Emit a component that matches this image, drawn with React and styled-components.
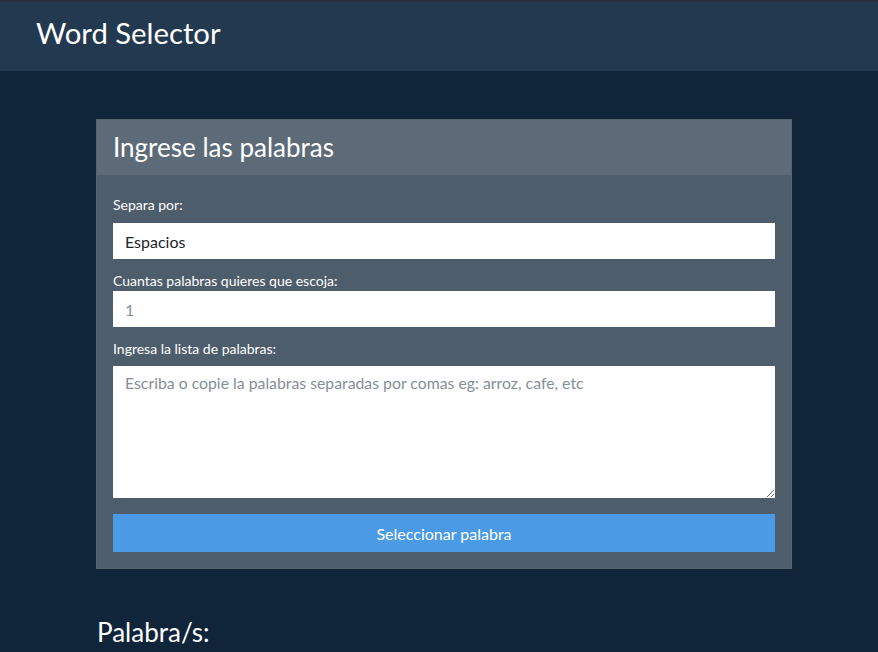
import React from 'react'
import styled, { createGlobalStyle } from 'styled-components'

const GlobalStyle = createGlobalStyle`
  body {
    margin: 0;
    background: #10243a;
    font-family: Lato, 'Open Sans', sans-serif;
    color: #ffffff;
  }
  * {
    box-sizing: border-box;
  }
`

const Navbar = styled.header`
  height: 71px;
  border-top: 2px solid #2b2d3f;
  background: #233950;
  display: flex;
  align-items: center;
  padding-left: 36px;
`

const Brand = styled.h1`
  margin: 0;
  font-size: 29.3px;
  font-weight: 400;
  line-height: 1;
  color: #ffffff;
  padding-bottom: 8px;
`

const Main = styled.main`
  padding: 48px 0 0 96px;
`

const Card = styled.section`
  width: 696px;
  border: 1px solid #56646f;
  background: #4e5d6c;
`

const CardHeader = styled.div`
  height: 55px;
  background: #5d6b79;
  display: flex;
  align-items: center;
  padding: 0 16px 2px;
  font-size: 26px;
  font-weight: 400;
`

const CardBody = styled.form`
  padding: 16px;
  display: flex;
  flex-direction: column;
`

const Label = styled.label`
  display: block;
  font-size: 14px;
  line-height: 20px;
  color: #ffffff;
  margin-top: ${p => p.$top}px;
  margin-bottom: ${p => p.$bottom}px;
`

const fieldBase = `
  width: 100%;
  border: 0;
  border-radius: 0;
  background: #ffffff;
  font-family: Lato, 'Open Sans', sans-serif;
  font-size: 16px;
  padding: 0 12px;
  outline: none;
`

const Select = styled.select`
  ${fieldBase}
  height: 36px;
  color: #212529;
  appearance: none;
`

const NumberInput = styled.input`
  ${fieldBase}
  height: 36px;
  color: #212529;
  &::placeholder {
    color: #868e96;
  }
`

const TextArea = styled.textarea`
  ${fieldBase}
  height: 132px;
  padding: 7px 12px;
  font-size: 15.8px;
  line-height: 20px;
  resize: vertical;
  display: block;
  &::placeholder {
    color: #868e96;
  }
`

const Button = styled.button`
  margin-top: 16px;
  height: 38px;
  border: 0;
  border-radius: 0;
  background: #4a9ae6;
  color: #ffffff;
  font-family: Lato, 'Open Sans', sans-serif;
  font-size: 16px;
  cursor: pointer;
`

const ResultTitle = styled.h3`
  margin: 48px 0 0 1px;
  font-size: 26px;
  font-weight: 400;
  line-height: 31px;
  color: #ffffff;
`

export default function App() {
  return (
    <>
      <GlobalStyle />
      <Navbar>
        <Brand>Word Selector</Brand>
      </Navbar>
      <Main>
        <Card>
          <CardHeader>Ingrese las palabras</CardHeader>
          <CardBody onSubmit={e => e.preventDefault()}>
            <Label $top={4} $bottom={8}>Separa por:</Label>
            <Select defaultValue='espacios'>
              <option value='espacios'>Espacios</option>
              <option value='comas'>Comas</option>
            </Select>
            <Label $top={12} $bottom={0}>Cuantas palabras quieres que escoja:</Label>
            <NumberInput type='number' placeholder='1' />
            <Label $top={12} $bottom={7}>Ingresa la lista de palabras:</Label>
            <TextArea placeholder='Escriba o copie la palabras separadas por comas eg: arroz, cafe, etc' />
            <Button type='submit'>Seleccionar palabra</Button>
          </CardBody>
        </Card>
        <ResultTitle>Palabra/s:</ResultTitle>
      </Main>
    </>
  )
}
